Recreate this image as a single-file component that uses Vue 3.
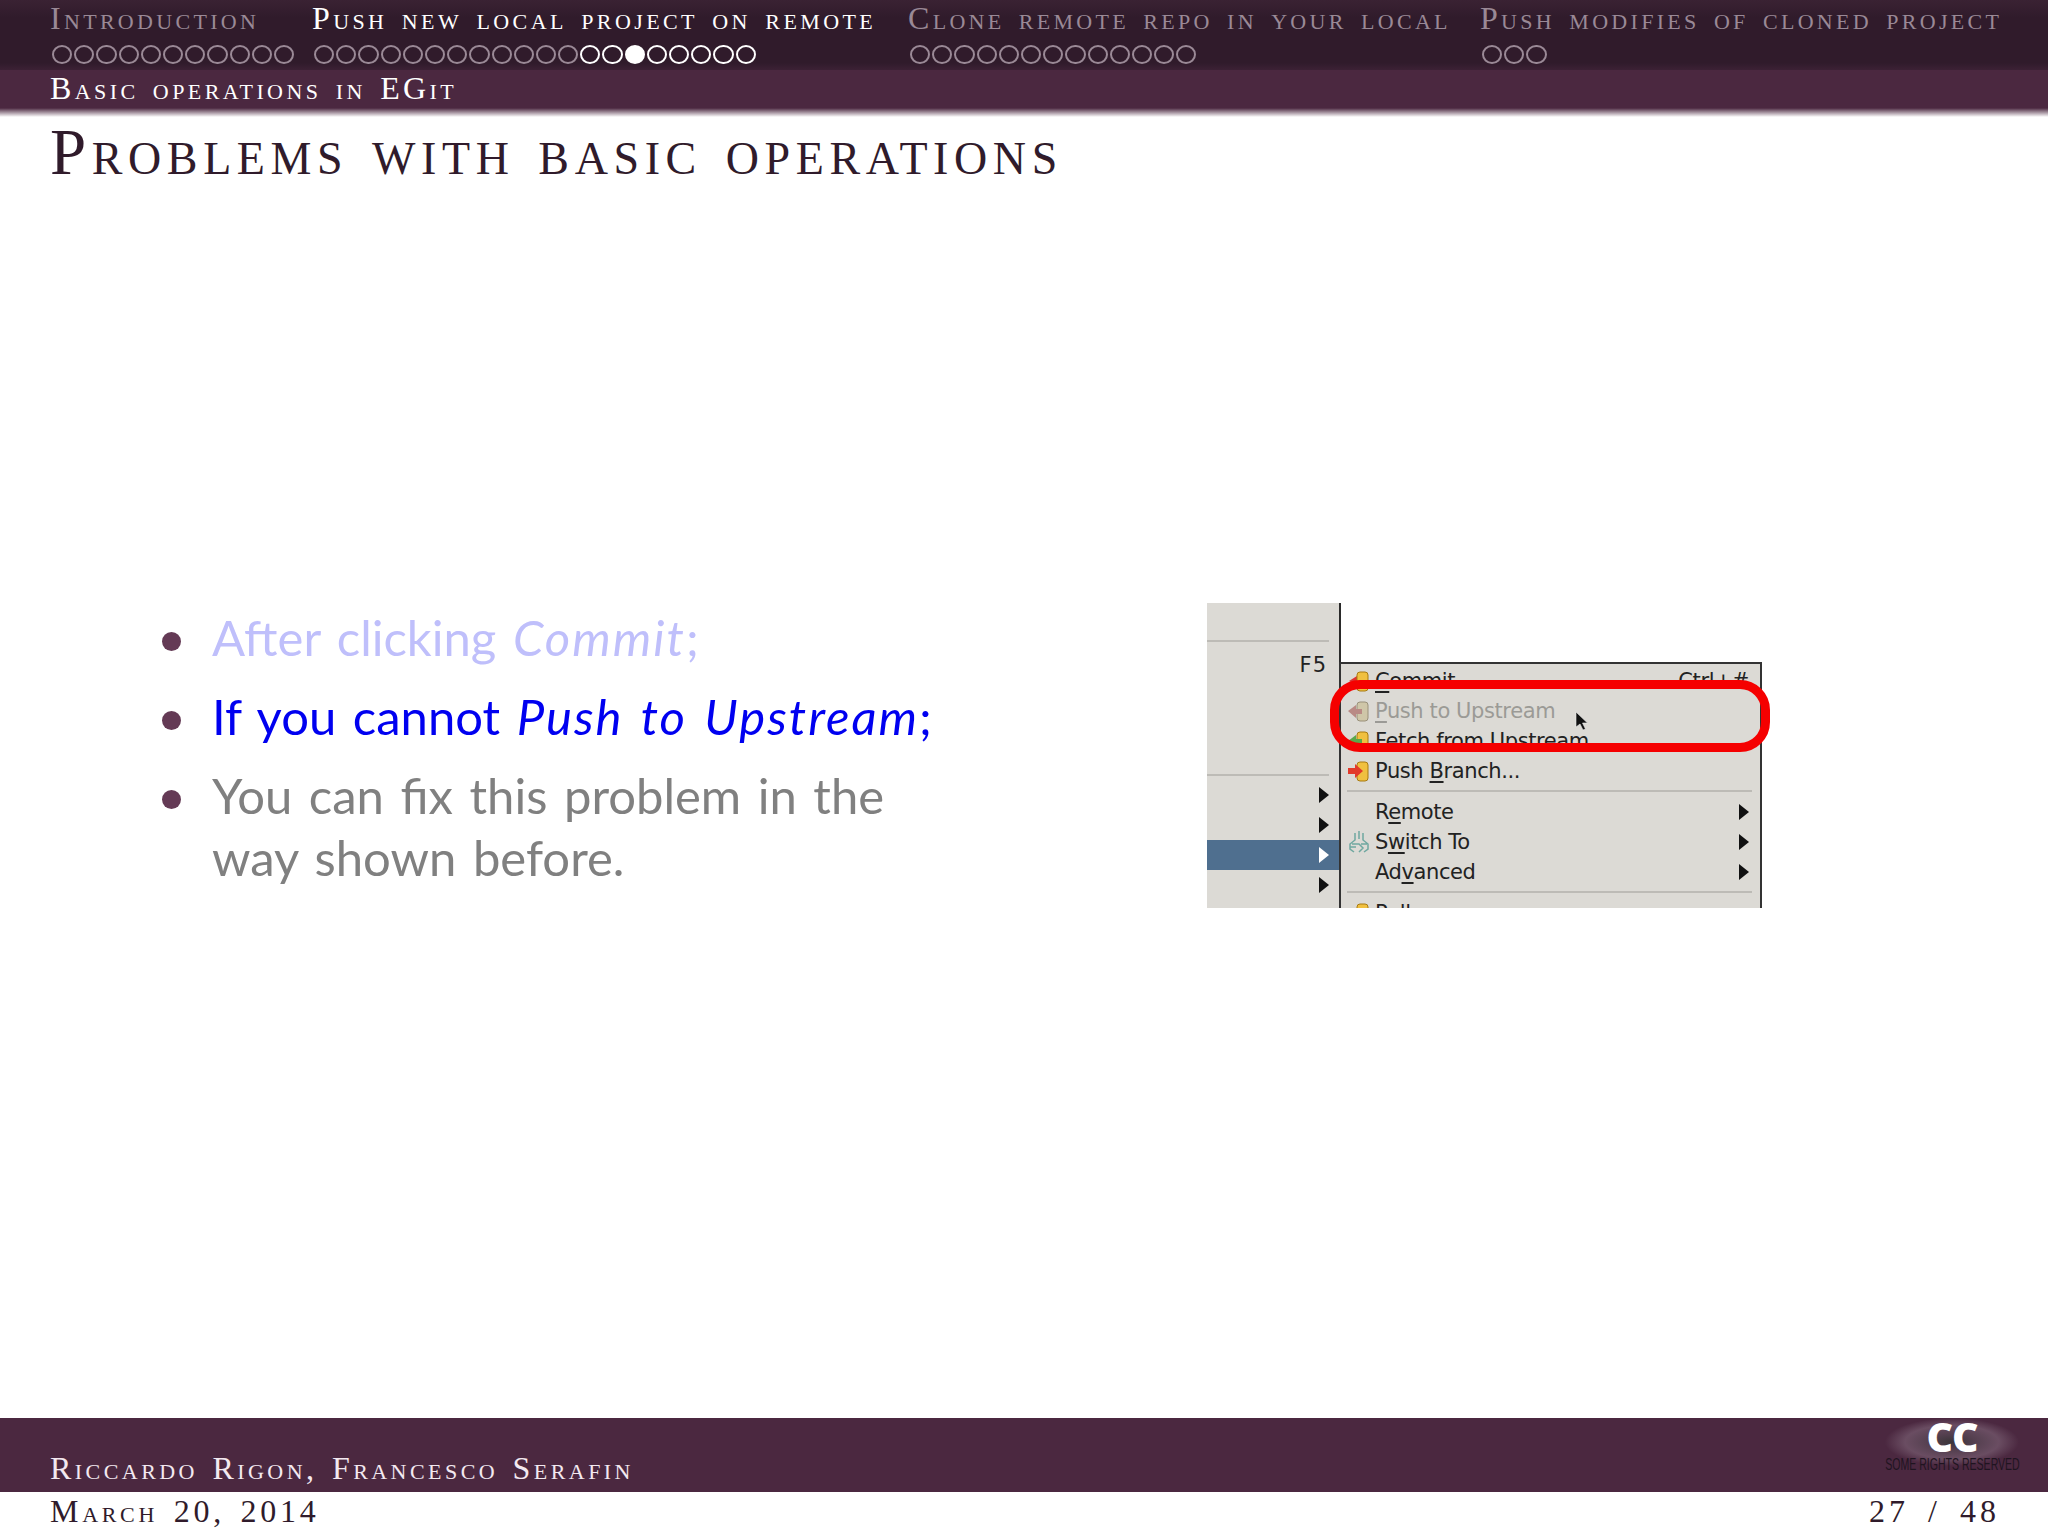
<script setup>
const sections = [
  { title: 'Introduction', dots: Array(11).fill('off'), cls: 'w1' },
  { title: 'Push new local project on remote', active: true, cls: 'w2',
    dots: [...Array(12).fill('off'), 'on', 'on', 'cur', ...Array(5).fill('on')] },
  { title: 'Clone remote repo in your local', dots: Array(13).fill('off'), cls: 'w3' },
  { title: 'Push modifies of cloned project', dots: Array(3).fill('off'), cls: 'w4' }
]
const items = [
  { cls: 'faded', pre: 'After clicking ', em: 'Commit', post: ';' },
  { cls: 'current', pre: 'If you cannot ', em: 'Push to Upstream', post: ';' },
  { cls: 'muted', pre: 'You can fix this problem in the way shown before.', em: '', post: '' }
]
</script>

<template>
  <div class="slide">
    <header class="head">
      <nav class="nav">
        <div v-for="s in sections" :key="s.title" class="sec" :class="[s.cls, { active: s.active }]">
          <div class="sec-title">{{ s.title }}</div>
          <div class="dots">
            <span v-for="(d, i) in s.dots" :key="i" class="dot" :class="d"></span>
          </div>
        </div>
      </nav>
      <div class="sub">Basic operations in EGit</div>
      <div class="fade"></div>
    </header>

    <h1 class="title">Problems with basic operations</h1>

    <main class="main">
      <ul class="list">
        <li v-for="it in items" :key="it.pre" :class="it.cls">
          <span class="bullet"></span>
          <span class="txt">{{ it.pre }}<em v-if="it.em">{{ it.em }}</em>{{ it.post }}</span>
        </li>
      </ul>

      <div class="shot">
        <div class="pane">
          <div class="p-top"></div>
          <div class="p-sep"></div>
          <div class="p-f5"><span>F5</span></div>
          <div class="p-sep"></div>
          <div class="p-row"><i class="arr"></i></div>
          <div class="p-row"><i class="arr"></i></div>
          <div class="p-row sel"><i class="arr"></i></div>
          <div class="p-row"><i class="arr"></i></div>
        </div>
        <div class="right">
          <div class="menu">
            <div class="m-row commit">
              <svg class="ic" viewBox="0 0 24 24"><path d="M2 12l8-5v10z" fill="#d33"/><rect x="10" y="3" width="11" height="19" rx="3" fill="#f0c040" stroke="#a87a10"/></svg>
              <span class="lbl"><u>C</u>ommit</span><span class="key">Ctrl+#</span>
            </div>
            <div class="m-row off">
              <svg class="ic" viewBox="0 0 24 24"><rect x="10" y="3" width="11" height="19" rx="3" fill="#cfc6a8" stroke="#99907a"/><path d="M1 12l8-6v4h6v5H9v4z" fill="#b98a85"/></svg>
              <span class="lbl"><u>P</u>ush to Upstream</span>
            </div>
            <div class="m-row">
              <svg class="ic" viewBox="0 0 24 24"><rect x="10" y="3" width="11" height="19" rx="3" fill="#f0c040" stroke="#a87a10"/><path d="M1 12l8-6v4h6v5H9v4z" fill="#5aa84a"/></svg>
              <span class="lbl">Fetch from Upstream</span>
            </div>
            <div class="m-row">
              <svg class="ic" viewBox="0 0 24 24"><rect x="10" y="3" width="11" height="19" rx="3" fill="#f0c040" stroke="#a87a10"/><path d="M1 9h7V5l8 7-8 7v-4H1z" fill="#e23a2a"/></svg>
              <span class="lbl">Push <u>B</u>ranch...</span>
            </div>
            <div class="m-sep"></div>
            <div class="m-row">
              <span class="ic"></span><span class="lbl">R<u>e</u>mote</span><i class="arr"></i>
            </div>
            <div class="m-row">
              <svg class="ic" viewBox="0 0 24 24" fill="none" stroke="#6fa8a0" stroke-width="1.500"><path d="M12 1v8M8 3v7l-5 4v5l4 3M16 3v7l5 4v5l-4 3M5 14h7l4 4-4 4M20 14h-6M3 17h6"/></svg>
              <span class="lbl">S<u>w</u>itch To</span><i class="arr"></i>
            </div>
            <div class="m-row">
              <span class="ic"></span><span class="lbl">Ad<u>v</u>anced</span><i class="arr"></i>
            </div>
            <div class="m-sep"></div>
            <div class="m-row">
              <svg class="ic" viewBox="0 0 24 24"><rect x="10" y="3" width="11" height="19" rx="3" fill="#f0c040" stroke="#a87a10"/></svg>
              <span class="lbl">Pull</span>
            </div>
          </div>
        </div>
        <div class="ring"></div>
        <svg class="cursor" viewBox="0 0 14 20"><path d="M1 1v15l4-3 3 6 2.500-1-3-6h5z" fill="#111" stroke="#eee" stroke-width=".6"/></svg>
      </div>
    </main>

    <footer class="foot">
      <div class="bar">
        <span class="authors">Riccardo Rigon, Francesco Serafin</span>
        <div class="cc">
          <span class="cc-mark">CC</span>
          <span class="cc-text">SOME RIGHTS RESERVED</span>
        </div>
      </div>
      <div class="info">
        <span class="date">March 20, 2014</span>
        <span class="page">27 / 48</span>
      </div>
    </footer>
  </div>
</template>

<style>
html, body { margin: 0; background: #fff; }
</style>

<style scoped>
.slide {
  width: 2048px;
  height: 1536px;
  display: flex;
  flex-direction: column;
  overflow: hidden;
  background: #fff;
  font-family: "Liberation Serif", serif;
  font-variant: small-caps;
}
.head { background: #4b2840; color: #fff; }
.nav {
  height: 70px;
  box-sizing: border-box;
  padding-left: 50px;
  display: flex;
  background: linear-gradient(#3a2233, #301b2b 25%, #301b2b 90%, #3c2135);
}
.sec { color: #9a8996; }
.sec.active { color: #fff; }
.w1 { width: 262px; }
.w2 { width: 596px; }
.w3 { width: 572px; }
.sec-title {
  font-size: 32px;
  line-height: 37px;
  letter-spacing: 3.3px;
  word-spacing: 3px;
  white-space: nowrap;
}
.active .sec-title { letter-spacing: 3.4px; }
.dots { display: flex; gap: 2px; padding-left: 2px; margin-top: 8px; }
.dot {
  width: 20.2px;
  height: 19px;
  box-sizing: border-box;
  flex: none;
  border: 2.500px solid #9a8996;
  border-radius: 50%;
}
.dot.on { border-color: #fff; }
.dot.cur { border-color: #fff; background: #fff; }
.sub {
  height: 38px;
  box-sizing: border-box;
  padding-left: 50px;
  font-size: 32px;
  line-height: 36px;
  letter-spacing: 3.4px;
  word-spacing: 3px;
}
.fade { height: 9px; background: linear-gradient(#4b2840, #fff); }
.title {
  margin: -2px 0 0;
  height: 74px;
  padding-left: 50px;
  font-size: 65px;
  font-weight: 400;
  line-height: 74px;
  letter-spacing: 5.6px;
  word-spacing: 2px;
  color: #301b2b;
  white-space: nowrap;
}
.main {
  flex: 1;
  display: flex;
  align-items: center;
  padding-bottom: 97px;
  font-variant: normal;
}
.list {
  list-style: none;
  margin: 0 0 17px;
  padding: 0 0 0 162px;
  width: 1207px;
  box-sizing: border-box;
  flex: none;
  font-family: Lato, sans-serif;
  font-size: 49px;
  line-height: 62px;
  word-spacing: 4px;
}
.list em { letter-spacing: 2px; }
.list li { display: flex; margin-bottom: 17px; }
.list li:last-child { margin-bottom: 0; }
.bullet {
  flex: none;
  width: 19px;
  height: 19px;
  margin: 26px 31px 0 0;
  border-radius: 50%;
  background: #643a55;
}
.txt { width: 720px; }
.faded { color: #bfbffb; }
.current { color: #0000f0; }
.muted { color: #808080; }

.shot {
  position: relative;
  width: 555px;
  height: 305px;
  flex: none;
  display: flex;
  font-family: "DejaVu Sans", sans-serif;
  font-size: 21px;
  color: #222;
}
.shot u { text-underline-offset: 3px; }
.pane {
  width: 132px;
  height: 305px;
  overflow: hidden;
  background: #dcdad5;
  border-right: 2px solid #2a2a2a;
  box-sizing: content-box;
}
.p-top { height: 37px; }
.p-sep { height: 2px; margin-right: 10px; background: #bdbbb6; }
.p-f5 { height: 132px; text-align: right; padding: 11px 12px 0 0; box-sizing: border-box; letter-spacing: 1px; }
.p-row {
  height: 30px;
  display: flex;
  align-items: center;
  justify-content: flex-end;
  padding-right: 10px;
}
.p-sep + .p-row { margin-top: 4px; }
.p-row.sel { background: #4f6f8f; }
.p-row.sel .arr { border-left-color: #fff; }
.arr {
  flex: none;
  width: 0;
  height: 0;
  border-top: 8px solid transparent;
  border-bottom: 8px solid transparent;
  border-left: 10px solid #111;
}
.right { flex: 1; display: flex; flex-direction: column; padding-top: 59px; min-width: 0; margin-left: -2px; }
.menu {
  flex: 1;
  min-height: 0;
  overflow: hidden;
  background: #dcdad5;
  border: 2px solid #333;
  border-bottom: 0;
  box-sizing: border-box;
  padding-top: 2px;
}
.m-row {
  height: 30px;
  display: flex;
  align-items: center;
  padding: 0 11px 0 6px;
}
.ic { width: 24px; height: 24px; flex: none; margin-right: 4px; }
.lbl { flex: 1; white-space: nowrap; letter-spacing: -.4px; }
.key { letter-spacing: -.3px; }
.off { color: #9b9a96; }
.m-sep { height: 2px; margin: 4px 8px 5px 6px; background: #bdbbb6; }
.ring {
  position: absolute;
  left: 123px;
  top: 77px;
  width: 440px;
  height: 72px;
  box-sizing: border-box;
  border: 9px solid #f50000;
  border-radius: 30px;
}
.cursor {
  position: absolute;
  left: 368px;
  top: 108px;
  width: 14px;
  height: 20px;
}

.bar {
  height: 74px;
  background: #4b2840;
  color: #f3e9f0;
  display: flex;
  justify-content: space-between;
  padding-left: 50px;
}
.authors {
  align-self: flex-end;
  font-size: 32px;
  line-height: 40px;
  padding-bottom: 4px;
  letter-spacing: 3.45px;
  word-spacing: 3px;
}
.cc {
  width: 134px;
  height: 60px;
  margin-right: 29px;
  display: flex;
  flex-direction: column;
  align-items: center;
  background: radial-gradient(closest-side at 50% 40%, #3a3539 0, #554050 35%, #6a4d62 70%, rgba(106, 77, 98, 0) 100%);
  font-family: "Open Sans", sans-serif;
  font-variant: normal;
}
.cc-mark { font-size: 41px; font-weight: 800; line-height: 36px; color: #fff; letter-spacing: -1px; }
.cc-text {
  font-family: "Liberation Sans", sans-serif;
  font-size: 17px;
  line-height: 18px;
  margin-top: 2px;
  color: #1f1420;
  white-space: nowrap;
  transform: scaleX(.62);
}
.info {
  height: 44px;
  padding: 0 48px 0 50px;
  display: flex;
  justify-content: space-between;
  font-size: 32px;
  line-height: 38px;
  letter-spacing: 3.7px;
  word-spacing: 4px;
  color: #301b2b;
}
.page { letter-spacing: 4px; word-spacing: 7px; }
</style>
